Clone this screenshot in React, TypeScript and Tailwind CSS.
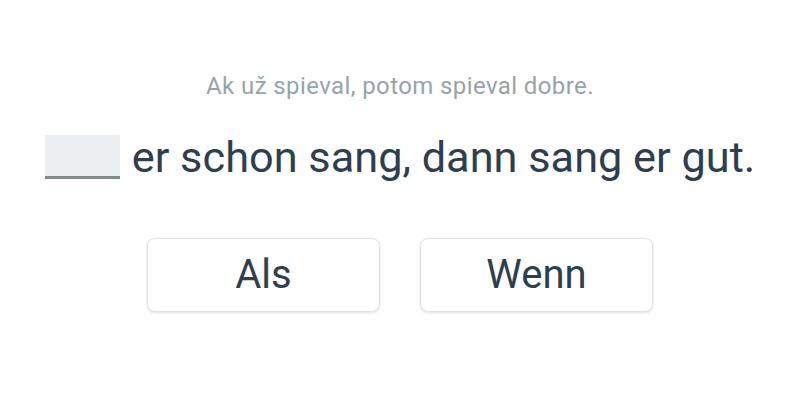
import React from "react";

export default function App() {
  return (
    <div className="w-[800px] h-[400px] bg-white flex flex-col items-center" style={{ fontFamily: "Roboto, sans-serif" }}>
      <div className="mt-[70px] text-[24px] tracking-[0.4px] leading-[32px] text-[#95a5a6]">Ak už spieval, potom spieval dobre.</div>
      <div className="mt-[30px] flex items-end text-[43.3px] leading-[52px] text-[#2c3e50]">
        <span className="inline-block w-[75px] h-[44px] bg-[#eceff1] border-b-[3px] border-[#7f8c8d] mr-[12px] mb-[5px]"></span>
        <span>er schon sang, dann sang er gut.</span>
      </div>
      <div className="mt-[54px] flex gap-[40px]">
        <button className="w-[233px] h-[74px] bg-white border border-[#e2e2e2] rounded-[8px] shadow-[0_1px_3px_rgba(0,0,0,0.12)] text-[40px] text-[#2c3e50]">Als</button>
        <button className="w-[233px] h-[74px] bg-white border border-[#e2e2e2] rounded-[8px] shadow-[0_1px_3px_rgba(0,0,0,0.12)] text-[40px] text-[#2c3e50]">Wenn</button>
      </div>
    </div>
  );
}
